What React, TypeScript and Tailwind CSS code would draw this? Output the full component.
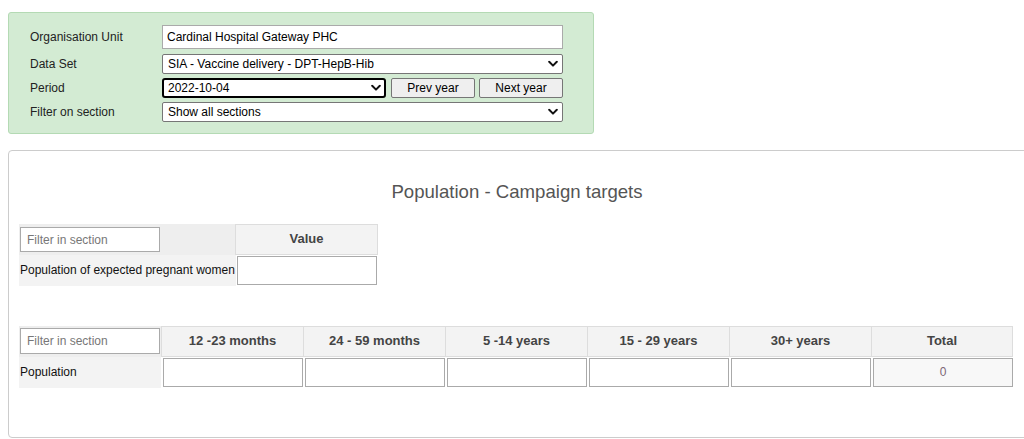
import React from "react";

function Chevron() {
  return (
    <svg
      className="pointer-events-none absolute right-[5px] top-1/2 -translate-y-1/2"
      width="10"
      height="7"
      viewBox="0 0 10 7"
      fill="none"
    >
      <path d="M1.2 1.3 L5 5.1 L8.8 1.3" stroke="#111" strokeWidth="2" strokeLinecap="round" strokeLinejoin="round" />
    </svg>
  );
}

function Select({
  value,
  width,
  focused,
}: {
  value: string;
  width: string;
  focused?: boolean;
}) {
  return (
    <div className={`relative h-[20px] ${width}`}>
      <select
        defaultValue={value}
        className={
          focused
            ? "h-full w-full appearance-none rounded-[3px] border-2 border-black bg-white pl-[4px] text-[12px] leading-[16px] text-black outline-none"
            : "h-full w-full appearance-none rounded-[2px] border border-[#767676] bg-white pl-[5px] text-[12px] leading-[18px] text-black outline-none"
        }
      >
        <option>{value}</option>
      </select>
      <Chevron />
    </div>
  );
}

const ageCols = ["12 -23 months", "24 - 59 months", "5 -14 years", "15 - 29 years", "30+ years", "Total"];

export default function App() {
  return (
    <div className="h-[439px] w-[1024px] overflow-hidden bg-white font-['Liberation_Sans',Arial,sans-serif] text-[12px] text-[#222]">
      {/* Selection box */}
      <div className="ml-[8px] mt-[12px] w-[586px] rounded-[3px] border border-[#b4dab4] bg-[#d3ebd3] pb-[11px] pl-[21px] pt-[12px]">
        <div className="flex h-[24px] items-center">
          <div className="w-[132px]">Organisation Unit</div>
          <input
            readOnly
            value="Cardinal Hospital Gateway PHC"
            className="h-[24px] w-[401px] border border-[#aaa] bg-white px-[4px] text-[12px] text-black outline-none"
          />
        </div>
        <div className="mt-[5px] flex h-[20px] items-center">
          <div className="w-[132px]">Data Set</div>
          <Select value="SIA - Vaccine delivery - DPT-HepB-Hib" width="w-[401px]" />
        </div>
        <div className="mt-[4px] flex h-[20px] items-center">
          <div className="w-[132px]">Period</div>
          <Select value="2022-10-04" width="w-[224px]" focused />
          <button className="ml-[5px] h-[20px] w-[84px] rounded-[2px] border border-[#767676] bg-[#efefef] text-[12px] text-black">
            Prev year
          </button>
          <button className="ml-[4px] h-[20px] w-[84px] rounded-[2px] border border-[#767676] bg-[#efefef] text-[12px] text-black">
            Next year
          </button>
        </div>
        <div className="mt-[4px] flex h-[20px] items-center">
          <div className="w-[132px]">Filter on section</div>
          <Select value="Show all sections" width="w-[401px]" />
        </div>
      </div>

      {/* Data entry panel */}
      <div className="ml-[8px] mt-[16px] h-[288px] w-[1020px] rounded-[4px] border border-[#ccc] pl-[10px] pt-[31px]">
        <div className="w-[996px] text-center text-[18.6px] leading-[20px] text-[#555]">
          Population - Campaign targets
        </div>

        {/* Table 1 */}
        <div className="mt-[22px]">
          <div className="flex h-[31px]">
            <div className="h-[31px] w-[216px] bg-[#eee] pl-[1px] pt-[3px]">
              <input
                placeholder="Filter in section"
                className="h-[25px] w-[140px] border border-[#aaa] bg-white px-[6px] text-[12px] text-black outline-none placeholder:text-[#777]"
              />
            </div>
            <div className="flex w-[143px] items-center justify-center border border-[#ddd] bg-[#f3f3f3] pb-[2px] text-[13px] font-bold text-[#444]">
              Value
            </div>
          </div>
          <div className="flex h-[31px]">
            <div className="flex w-[217px] items-center bg-[#f3f3f3] pb-[2px] pl-[1px] text-[#111]">
              Population of expected pregnant women
            </div>
            <div className="pl-[1px] pt-[1px]">
              <input className="h-[29px] w-[140px] border border-[#aaa] bg-white outline-none" />
            </div>
          </div>
        </div>

        {/* Table 2 */}
        <div className="mt-[40px]">
          <div className="flex h-[31px]">
            <div className="h-[31px] w-[142px] bg-[#eee] pl-[1px] pt-[2px]">
              <input
                placeholder="Filter in section"
                className="h-[26px] w-[140px] border border-[#aaa] bg-white px-[6px] text-[12px] text-black outline-none placeholder:text-[#777]"
              />
            </div>
            {ageCols.map((c, i) => (
              <div
                key={c}
                className={
                  i === ageCols.length - 1
                    ? "flex w-[142px] items-center justify-center border border-[#ddd] bg-[#f3f3f3] pb-[2px] text-[13px] font-bold text-[#444]"
                    : "flex w-[142px] items-center justify-center border-y border-l border-[#ddd] bg-[#f3f3f3] pb-[2px] text-[13px] font-bold text-[#444]"
                }
              >
                {c}
              </div>
            ))}
          </div>
          <div className="flex h-[31px]">
            <div className="flex w-[142px] items-center bg-[#f3f3f3] pb-[2px] pl-[1px] text-[#111]">Population</div>
            {ageCols.map((c, i) => (
              <div key={c} className="w-[142px] pl-[2px] pt-[1px]">
                {i === ageCols.length - 1 ? (
                  <input
                    readOnly
                    value="0"
                    className="h-[29px] w-[140px] border border-[#aaa] bg-[#f8f8f8] pb-[2px] text-center text-[12px] text-[#7d6676] outline-none"
                  />
                ) : (
                  <input className="h-[29px] w-[140px] border border-[#aaa] bg-white outline-none" />
                )}
              </div>
            ))}
          </div>
        </div>
      </div>
    </div>
  );
}
